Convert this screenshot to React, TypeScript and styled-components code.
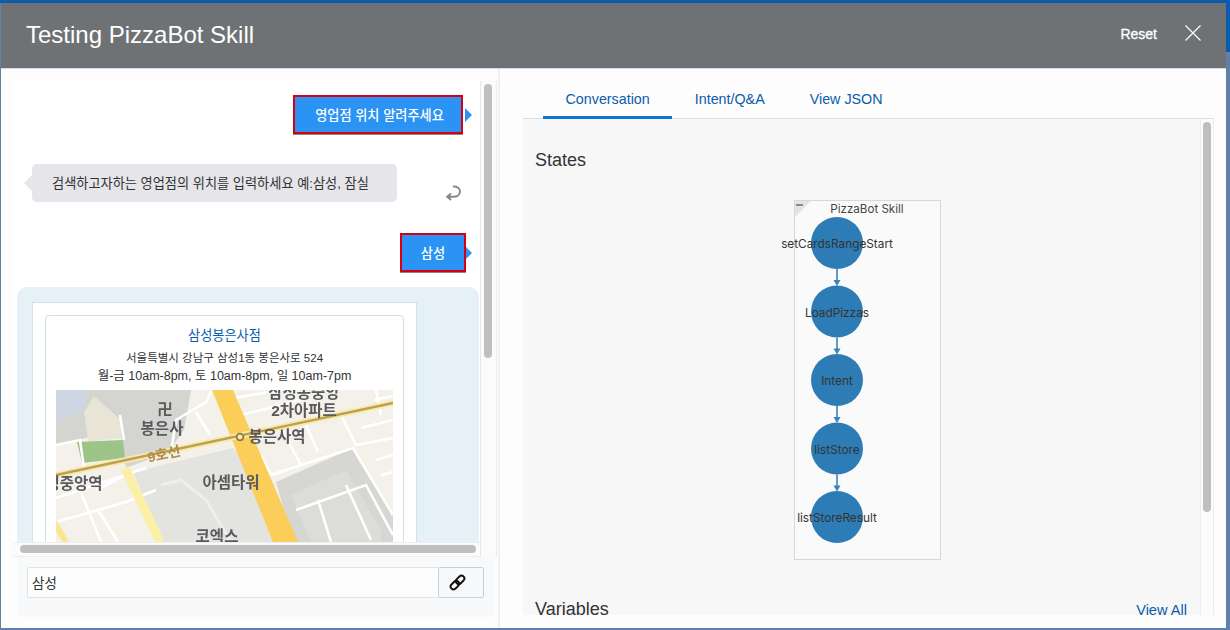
import React from "react";
import styled, { createGlobalStyle } from "styled-components";

const Global = createGlobalStyle`
  html, body { margin: 0; padding: 0; background: #fff; }
  * { box-sizing: border-box; }
  body { font-family: "Liberation Sans", "Noto Sans CJK KR", Arial, sans-serif; }
`;

const KR = `"Liberation Sans", "Noto Sans CJK KR", sans-serif`;

const Page = styled.div`
  width: 1230px;
  height: 630px;
  padding: 3px 4px 2px 1px;
  overflow: hidden;
  background:
    linear-gradient(#0b5cab, #0b5cab) top / 100% 3px no-repeat,
    linear-gradient(#0b5cab, #0b5cab) right top / 4px 52px no-repeat,
    #5f80ad;
`;
const Modal = styled.div`
  width: 100%;
  height: 100%;
  display: flex;
  flex-direction: column;
  background: #fdfdfd;
`;
const Header = styled.header`
  height: 66px;
  flex: none;
  display: flex;
  align-items: center;
  padding: 0 25px;
  background: #6f7275;
  border-bottom: 1px solid #d3dce4;
  color: #fff;
`;
const Title = styled.h1`
  margin: 0;
  flex: 1;
  font-size: 24px;
  font-weight: 400;
  position: relative;
  top: -1px;
`;
const Reset = styled.span`
  font-size: 14px;
  margin-right: 28px;
  -webkit-text-stroke: 0.3px #fff;
  position: relative;
  top: -2px;
`;
const CloseIcon = styled.svg`
  width: 16px;
  height: 16px;
  position: relative;
  top: -3px;
`;
const Body = styled.div`
  flex: 1;
  display: flex;
  min-height: 0;
`;
const LeftPane = styled.section`
  width: 497px;
  flex: none;
  padding: 12px 0 0 12px;
  display: flex;
  flex-direction: column;
`;
const ChatRow = styled.div`
  display: flex;
  height: 476px;
`;
const ChatColumn = styled.div`
  width: 467px;
  flex: none;
  display: flex;
  flex-direction: column;
`;
const ChatScroll = styled.div`
  height: 461px;
  background: #fff;
  overflow: hidden;
  padding-top: 14px;
`;
const HTrack = styled.div`
  height: 15px;
  background: #fbfbfb;
  border-top: 1px solid #eceff2;
  border-bottom: 1px solid #eceff2;
  padding: 2px 4px 0 7px;
`;
const HThumb = styled.div`
  height: 8px;
  border-radius: 4px;
  background: #bfbfbf;
`;
const VTrack = styled.div`
  width: 17px;
  flex: none;
  background: #fbfbfb;
  border-left: 1px solid #e8e8e8;
  border-right: 1px solid #ededed;
  padding: 3px 3px 0 3px;
`;
const VThumb = styled.div<{ $h: number }>`
  height: ${(p) => p.$h}px;
  width: 8px;
  border-radius: 4px;
  background: #bfbfbf;
`;
const UserRow = styled.div<{ $right: number; $mb: number }>`
  display: flex;
  justify-content: flex-end;
  padding-right: ${(p) => p.$right}px;
  margin-bottom: ${(p) => p.$mb}px;
`;
const UserBubble = styled.div<{ $w: number; $shift: number; $tip: number; $gap: number }>`
  position: relative;
  width: ${(p) => p.$w}px;
  height: 39px;
  padding-left: ${(p) => p.$shift}px;
  display: flex;
  align-items: center;
  justify-content: center;
  background: #2a93f3;
  border: 2px solid #d8000f;
  box-shadow: 0 1px 0 #888;
  color: #fff;
  font-family: ${KR};
  font-size: 13.2px;
  font-weight: 500;
  &::after {
    content: "";
    position: absolute;
    right: ${(p) => -(2 + p.$gap + p.$tip)}px;
    top: ${(p) => 17.5 - p.$tip}px;
    border-left: ${(p) => p.$tip}px solid #2a93f3;
    border-top: ${(p) => p.$tip}px solid transparent;
    border-bottom: ${(p) => p.$tip}px solid transparent;
  }
`;
const BotRow = styled.div`
  display: flex;
  align-items: flex-end;
  margin: 0 0 31px 19px;
`;
const BotBubble = styled.div`
  position: relative;
  width: 365px;
  height: 38px;
  padding: 0 0 2px 20px;
  display: flex;
  align-items: center;
  background: #e5e5ea;
  border-radius: 5px;
  color: #333;
  font-family: ${KR};
  font-size: 13.2px;
  &::before {
    content: "";
    position: absolute;
    left: -8px;
    top: 11px;
    border-right: 8px solid #e5e5ea;
    border-top: 8px solid transparent;
    border-bottom: 8px solid transparent;
  }
`;
const ReturnIcon = styled.svg`
  width: 16px;
  height: 16px;
  margin: 0 0 1px 48px;
`;
const CardBubble = styled.div`
  margin: 0 1px 0 4px;
  padding: 15px;
  height: 300px;
  border-radius: 10px 10px 0 0;
  background: #e6f1f7;
`;
const Card = styled.article`
  width: 385px;
  height: 300px;
  padding: 12px;
  background: #fff;
  border: 1px solid #d5e1ea;
`;
const CardInner = styled.div`
  height: 300px;
  padding: 10px 10px 0;
  background: #fff;
  border: 1px solid #d5dde6;
  border-radius: 4px;
  text-align: center;
  font-family: ${KR};
`;
const StoreName = styled.div`
  color: #0b5cad;
  font-size: 13.2px;
  line-height: 20px;
  margin-bottom: 3px;
`;
const StoreLine = styled.div<{ $size: number }>`
  color: #333;
  font-size: ${(p) => p.$size}px;
  line-height: 18px;
  white-space: nowrap;
`;
const MapBox = styled.svg`
  display: block;
  width: 337px;
  height: 152px;
  margin-top: 5px;
  filter: blur(0.4px);
`;
const MapLabel = styled.text`
  font-family: ${KR};
  font-size: 15.5px;
  font-weight: 700;
  fill: #5a5a5e;
  text-anchor: middle;
  dominant-baseline: central;
`;
const LineLabel = styled(MapLabel)`
  fill: #b08c4c;
  font-size: 14px;
`;
const InputBar = styled.div`
  margin-left: 4px;
  width: 477px;
  height: 60px;
  padding: 10px;
  display: flex;
  background: #f8f9fb;
`;
const TextInput = styled.input`
  width: 411px;
  height: 31px;
  padding: 0 4px 2px;
  border: 1px solid #e0e4e9;
  border-right: 0;
  border-radius: 2px 0 0 2px;
  background: #fdfdfe;
  color: #333;
  font-family: ${KR};
  font-size: 13.5px;
  outline: none;
`;
const LinkButton = styled.button`
  width: 46px;
  height: 31px;
  padding: 0 8px 0 0;
  display: flex;
  align-items: center;
  justify-content: center;
  border: 1px solid #c4d0de;
  border-radius: 2px;
  background: #f8f9fb;
`;
const ChainIcon = styled.svg`
  width: 17px;
  height: 17px;
`;
const RightPane = styled.section`
  flex: 1;
  padding: 12px 0 0 23px;
  border-left: 2px solid #f0f0f0;
`;
const TabBar = styled.nav`
  width: 691px;
  height: 38px;
  padding-left: 20px;
  display: flex;
  border-bottom: 1px solid #d5e1ea;
`;
const Tab = styled.a<{ $active?: boolean }>`
  height: 38px;
  padding: 0 22.5px;
  line-height: 36px;
  color: #0b5cad;
  font-size: 14.3px;
  border-bottom: 3px solid ${(p) => (p.$active ? "#0f75d9" : "transparent")};
`;
const PanelRow = styled.div`
  display: flex;
  height: 496px;
  width: 691px;
`;
const Panel = styled.div`
  width: 677px;
  flex: none;
  padding: 0 12px;
  background: #f7f7f7;
  overflow: hidden;
`;
const PanelTrack = styled.div`
  width: 14px;
  flex: none;
  background: #fcfcfc;
  border-left: 1px solid #ececec;
  border-right: 1px solid #ececec;
  padding: 3px 2px 0 2px;
`;
const SectionHead = styled.div`
  display: flex;
  justify-content: space-between;
  align-items: baseline;
  padding-right: 1px;
`;
const SectionTitle = styled.h2<{ $top: number }>`
  margin: ${(p) => p.$top}px 0 0;
  color: #333;
  font-size: 18px;
  line-height: 22px;
  font-weight: 400;
`;
const ViewAll = styled.a`
  color: #0b5cad;
  font-size: 14.6px;
`;
const Diagram = styled.svg`
  display: block;
  width: 147px;
  height: 360px;
  margin: 29px 0 0 259px;
  overflow: visible;
`;
const NodeLabel = styled.text`
  font-family: Inter, "Liberation Sans", sans-serif;
  font-size: 11.8px;
  fill: #333;
  text-anchor: middle;
  dominant-baseline: central;
`;
const DiagramTitle = styled.text`
  font-family: Inter, "Liberation Sans", sans-serif;
  font-size: 11.6px;
  fill: #444;
  text-anchor: middle;
  dominant-baseline: central;
`;

const nodes = ["setCardsRangeStart", "LoadPizzas", "Intent", "listStore", "listStoreResult"];

const whiteRoads = [
  "M0 55 L24 50 L28 78",
  "M68 50 L64 25 M0 108 L90 78",
  "M0 132 L70 112 L100 100",
  "M20 90 L45 152 M42 120 L62 152 M70 85 L40 100",
  "M115 62 L120 30 L150 12 L156 0 M140 22 L154 45",
  "M178 8 L225 0 M185 25 L245 10 M195 45 L290 22 M205 65 L215 85",
  "M225 38 L245 75 M250 35 L262 62 M215 85 L297 58 L337 125",
  "M285 25 L300 55 L337 48 M305 38 L337 30 M320 70 L337 65 M325 85 L337 82 M318 10 L337 6 M320 0 L325 25",
  "M240 120 L310 95 L337 145 M262 110 L275 152 M290 95 L315 150",
];

export default function App() {
  return (
    <Page>
      <Global />
      <Modal>
        <Header>
          <Title>Testing PizzaBot Skill</Title>
          <Reset>Reset</Reset>
          <CloseIcon viewBox="0 0 16 16">
            <path d="M0.5 0.5 L15.5 15.5 M15.5 0.5 L0.5 15.5" stroke="#fff" strokeWidth="1.2" fill="none" />
          </CloseIcon>
        </Header>
        <Body>
          <LeftPane>
            <ChatRow>
              <ChatColumn>
                <ChatScroll>
                  <UserRow $right={17} $mb={30}>
                    <UserBubble $w={170} $shift={3} $tip={7} $gap={2}>영업점 위치 알려주세요</UserBubble>
                  </UserRow>
                  <BotRow>
                    <BotBubble>검색하고자하는 영업점의 위치를 입력하세요 예:삼성, 잠실</BotBubble>
                    <ReturnIcon viewBox="0 0 16 16">
                      <path
                        d="M8 1.5 C12 1 15 3.5 15 6.5 C15 10 12 11.8 8.5 11.8 L2.5 11.8 M6 8.5 L2.2 11.8 L6 15"
                        stroke="#85888a"
                        strokeWidth="1.9"
                        fill="none"
                      />
                    </ReturnIcon>
                  </BotRow>
                  <UserRow $right={14} $mb={15}>
                    <UserBubble $w={66} $shift={0} $tip={6} $gap={0}>삼성</UserBubble>
                  </UserRow>
                  <CardBubble>
                    <Card>
                      <CardInner>
                        <StoreName>삼성봉은사점</StoreName>
                        <StoreLine $size={11.5}>서울특별시 강남구 삼성1동 봉은사로 524</StoreLine>
                        <StoreLine $size={12.5}>월-금 10am-8pm, 토 10am-8pm, 일 10am-7pm</StoreLine>
                        <MapBox viewBox="0 0 337 152">
                          <rect width="337" height="152" fill="#f3f1ea" />
                          <path d="M0 0 L135 0 L128 40 L112 62 L70 78 L64 40 L0 55 Z" fill="#d4d4d1" />
                          <path d="M0 0 L30 0 L28 20 L0 32 Z" fill="#cdd6e2" />
                          <path d="M28 22 L38 6 L65 30 L65 48 L32 52 Z" fill="#e8e4d6" />
                          <path d="M21 52 L67 50 L69 68 L26 73 Z" fill="#9cc388" />
                          <path d="M77 82 L177 58 L211 95 L237 152 L107 152 Z" fill="#e3e3df" />
                          <path d="M220 92 L297 58 L337 125 L337 152 L237 152 Z" fill="#d6d6d2" />
                          <path d="M235 105 L290 80 L325 140 L325 152 L255 152 Z" fill="#dcdcd8" />
                          <path d={whiteRoads.join(" ")} stroke="#fff" strokeWidth="2.6" fill="none" />
                          <path d="M105 95 L125 90 L150 110 L175 152" stroke="#eeeeea" strokeWidth="3" fill="none" />
                          <path d="M69 78 L104 152" stroke="#fcf0a6" strokeWidth="9" fill="none" />
                          <path d="M-2 132 L10 152" stroke="#fce58f" strokeWidth="6" fill="none" />
                          <path d="M156 0 L177 0 L242 152 L217 152 Z" fill="#fbce59" />
                          <path d="M0 85 L337 13" stroke="#fbeaa5" strokeWidth="6" fill="none" />
                          <path d="M0 85 L337 13" stroke="#b9a05a" strokeWidth="2.4" fill="none" />
                          <circle cx="184" cy="47" r="3.4" fill="#fbeaa5" stroke="#8f7a3c" strokeWidth="1.8" />
                          <MapLabel x="248" y="2">삼성동중앙</MapLabel>
                          <MapLabel x="248" y="20">2차아파트</MapLabel>
                          <MapLabel x="109" y="19">卍</MapLabel>
                          <MapLabel x="106" y="38">봉은사</MapLabel>
                          <MapLabel x="221" y="46">봉은사역</MapLabel>
                          <LineLabel x="108" y="64" transform="rotate(-12 108 64)">9호선</LineLabel>
                          <MapLabel x="18" y="93">성중앙역</MapLabel>
                          <MapLabel x="175" y="92">아셈타워</MapLabel>
                          <MapLabel x="161" y="146">코엑스</MapLabel>
                        </MapBox>
                      </CardInner>
                    </Card>
                  </CardBubble>
                </ChatScroll>
                <HTrack>
                  <HThumb />
                </HTrack>
              </ChatColumn>
              <VTrack>
                <VThumb $h={274} />
              </VTrack>
            </ChatRow>
            <InputBar>
              <TextInput value="삼성" readOnly />
              <LinkButton aria-label="link">
                <ChainIcon viewBox="0 0 16 16">
                  <g transform="rotate(-45 8 8)" fill="none" stroke="#111" strokeWidth="1.8">
                    <rect x="0" y="5.3" width="9" height="5.4" rx="2.7" />
                    <rect x="7" y="5.3" width="9" height="5.4" rx="2.7" />
                  </g>
                </ChainIcon>
              </LinkButton>
            </InputBar>
          </LeftPane>
          <RightPane>
            <TabBar>
              <Tab $active>Conversation</Tab>
              <Tab>Intent/Q&amp;A</Tab>
              <Tab>View JSON</Tab>
            </TabBar>
            <PanelRow>
              <Panel>
                <SectionTitle $top={30}>States</SectionTitle>
                <Diagram viewBox="0 0 147 360">
                  <rect x="0.5" y="0.5" width="146" height="359" fill="#fafafa" stroke="#d6d9dc" />
                  <path d="M1 1 L17 1 L1 17 Z" fill="#dfe5ea" />
                  <path d="M2 5 L9 5" stroke="#8a8a8a" strokeWidth="2" />
                  <DiagramTitle x="73" y="9">PizzaBot Skill</DiagramTitle>
                  {nodes.map((_, i) =>
                    i < 4 ? (
                      <g key={i}>
                        <path d={`M43 ${69 + i * 68.5} L43 ${81 + i * 68.5}`} stroke="#3a84bd" strokeWidth="1.6" />
                        <path d={`M39.5 ${80 + i * 68.5} L46.5 ${80 + i * 68.5} L43 ${86 + i * 68.5} Z`} fill="#3a84bd" />
                      </g>
                    ) : null
                  )}
                  {nodes.map((n, i) => (
                    <circle key={n} cx="43" cy={43 + i * 68.5} r="26" fill="#2e7cb5" />
                  ))}
                  {nodes.map((n, i) => (
                    <NodeLabel key={n} x="43" y={44 + i * 68.5}>
                      {n}
                    </NodeLabel>
                  ))}
                </Diagram>
                <SectionHead>
                  <SectionTitle $top={38}>Variables</SectionTitle>
                  <ViewAll>View All</ViewAll>
                </SectionHead>
              </Panel>
              <PanelTrack>
                <VThumb $h={390} />
              </PanelTrack>
            </PanelRow>
          </RightPane>
        </Body>
      </Modal>
    </Page>
  );
}
